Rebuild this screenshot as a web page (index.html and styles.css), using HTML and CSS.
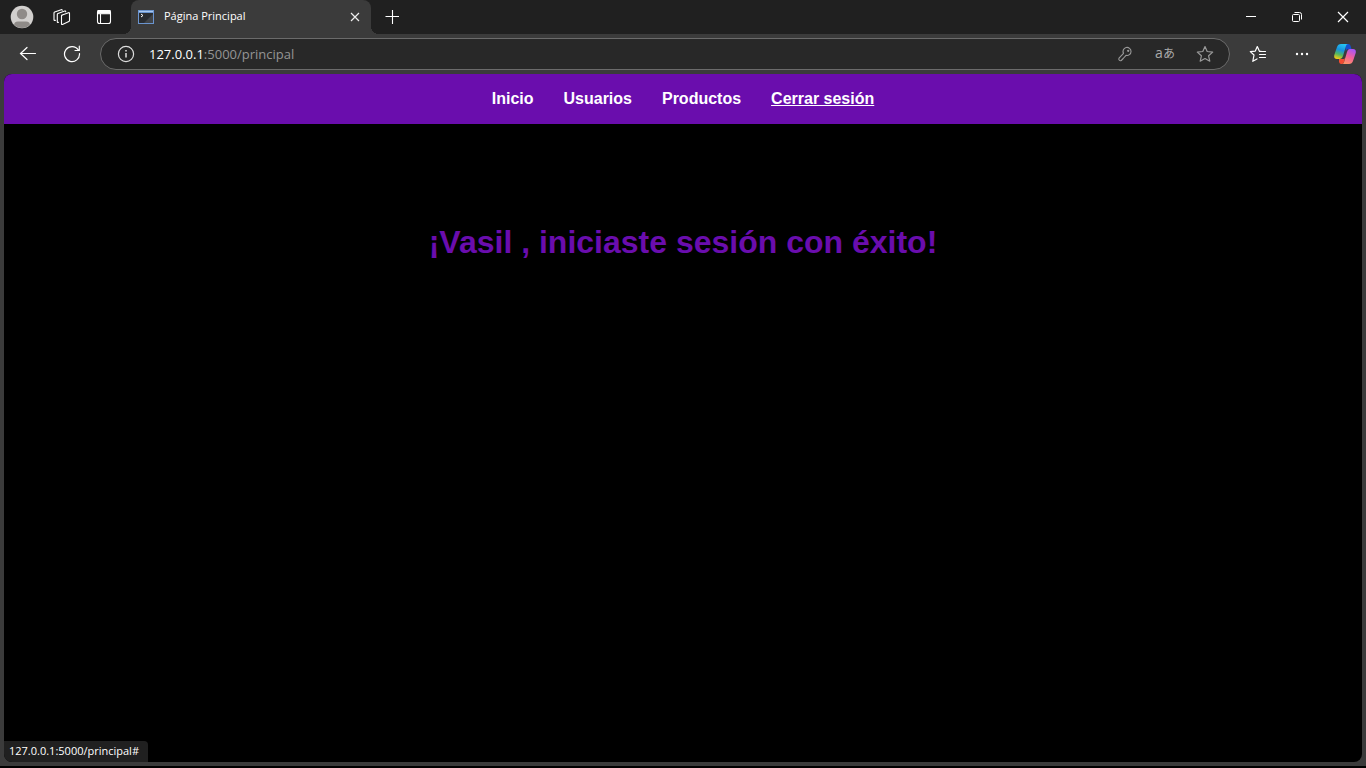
FILE: index.html
```html
<!DOCTYPE html>
<html lang="es">
<head>
<meta charset="utf-8">
<title>Página Principal</title>
<link rel="stylesheet" href="styles.css">
</head>
<body>
<div class="window">
  <header class="titlebar">
    <div class="title-tools">
      <button class="icon-btn profile" aria-label="Perfil">
        <svg width="24" height="24" viewBox="0 0 24 24"><defs><clipPath id="face"><circle cx="12" cy="12" r="11"/></clipPath></defs><circle cx="12" cy="12" r="11.300" fill="#d2d0ce"/><circle cx="12" cy="9" r="5.200" fill="#8f8b88"/><path clip-path="url(#face)" d="M4 24v-3.500q0-4 4-4h8q4 0 4 4V24z" fill="#8f8b88"/></svg>
      </button>
      <button class="icon-btn workspaces" aria-label="Áreas de trabajo">
        <svg width="18" height="18" viewBox="0 0 18 18" fill="none" stroke="#fff" stroke-width="1.100" stroke-linejoin="round" stroke-linecap="round"><path d="M8.500 7.200 15.500 4.700q1-.2 1 .8v6.900q0 .7-.7 1L9.500 16.400q-1 .4-1-.7V8.200q0-.8.700-1z"/><path d="M5.500 14.300l-.5.100q-.7.100-.7-.7V6.600q0-.8.700-1.100l6.700-2.500q1-.3 1 .7"/><path d="M2.500 12.300l-.7.100q-.8.200-.8-.7V5.100q0-.8.700-1.100L8.200 1.700q.9-.3 1 .5"/></svg>
      </button>
      <button class="icon-btn tab-actions" aria-label="Menú de pestañas">
        <svg width="16" height="16" viewBox="0 0 16 16" fill="none" stroke="#fff" stroke-width="1.100"><rect x="1.500" y="1.500" width="13" height="13" rx="2"/><path d="M2 1.500h12v3.200H2z" fill="#fff"/><path d="M4.500 5v9.500"/></svg>
      </button>
    </div>
    <div class="tab">
      <svg width="16" height="16" viewBox="0 0 16 16"><path d="M0 1h16v14H0z" fill="#6a94cf"/><path d="M1 2h14v1H1z" fill="#a9c8ef"/><path d="M1 4h14v10H1z" fill="#292c30"/><path d="M6 14 15 5v9z" fill="#414448"/><path d="m3 5 2 1.500L3 8" fill="none" stroke="#fff"/></svg>
      <span class="tab-title">Página Principal</span>
      <button class="tab-close" aria-label="Cerrar pestaña"><svg width="10" height="10" viewBox="0 0 10 10" stroke="#eee" stroke-width="1.200"><path d="m1 1 8 8M9 1 1 9"/></svg></button>
    </div>
    <button class="new-tab" aria-label="Nueva pestaña"><svg width="14" height="14" viewBox="0 0 14 14" stroke="#fff" stroke-width="1.100"><path d="M7.500 0v14M.5 6.500h14"/></svg></button>
    <div class="window-controls">
      <button aria-label="Minimizar"><svg width="10" height="10" viewBox="0 0 10 10" stroke="#fff"><path d="M0 4.500h10"/></svg></button>
      <button aria-label="Restaurar"><svg width="12" height="12" viewBox="0 0 12 12" fill="none" stroke="#fff"><rect x="1.500" y="3.500" width="7" height="7" rx="1"/><path d="M3.500 1.500h5q2 0 2 2v5"/></svg></button>
      <button aria-label="Cerrar"><svg width="12" height="12" viewBox="0 0 12 12" stroke="#fff" stroke-width="1.200"><path d="m1 1 10 10M11 1 1 11"/></svg></button>
    </div>
  </header>

  <div class="toolbar">
    <button class="tool" aria-label="Atrás"><svg width="18" height="16" viewBox="0 0 18 16" fill="none" stroke="#fff" stroke-width="1.200" stroke-linecap="round"><path d="M16.500 7.500H2M8 1.500l-6.500 6L8 13.500"/></svg></button>
    <button class="tool" aria-label="Actualizar"><svg width="18" height="18" viewBox="0 0 18 18" fill="none" stroke="#fff" stroke-width="1.200" stroke-linecap="round"><path d="M16.500 8.500A7.500 7.500 0 1 1 15.300 5M16.300 1.200V5.500H12"/></svg></button>
    <div class="address">
      <button class="info" aria-label="Información del sitio"><svg width="18" height="18" viewBox="0 0 18 18" fill="none" stroke="#ddd" stroke-width="1.200"><circle cx="9" cy="9" r="7.600"/><path d="M9 8v4.500M9 5v1.500" stroke-width="1.500"/></svg></button>
      <label class="host" for="url">127.0.0.1</label><input id="url" class="path" type="text" value=":5000/principal" spellcheck="false">
      <div class="address-actions">
        <button aria-label="Contraseña"><svg width="16" height="16" viewBox="0 0 16 16" fill="none" stroke="#999" stroke-width="1.100" stroke-linejoin="round"><path d="M6.500 7.300A4 4 0 1 1 9 9.300L6.200 12.500 4.300 14.500q-1 .6-2-.3-.9-1-.3-2z"/><circle cx="11.200" cy="4.800" r=".6" fill="#999"/></svg></button>
        <button class="translate" aria-label="Traducir"><span class="latin">a</span><span class="kana">あ</span></button>
        <button aria-label="Favorito"><svg width="18" height="18" viewBox="0 0 18 18" fill="none" stroke="#999" stroke-width="1.200" stroke-linejoin="round"><path d="m9 1.500 2.200 5 5.500.6-4.100 3.700 1.200 5.400L9 13.500l-4.800 2.700 1.200-5.400L1.300 7.100l5.500-.6z"/></svg></button>
      </div>
    </div>
    <div class="browser-actions">
      <button class="tool" aria-label="Favoritos"><svg width="18" height="18" viewBox="0 0 18 18" fill="none" stroke="#fff" stroke-width="1.200" stroke-linejoin="round" stroke-linecap="round"><path d="M13 6.500l-2.700-.4L8.300 1.500l-2 4.600-5 .5L5 10l-1.200 6.300 4.200-2.400"/><path d="M10.500 6.500h6M10.500 9.500h6M10.500 12.500h6"/></svg></button>
      <button class="tool" aria-label="Configuración"><svg width="14" height="4" viewBox="0 0 14 4" fill="#fff"><circle cx="2" cy="2" r="1.200"/><circle cx="7" cy="2" r="1.200"/><circle cx="12" cy="2" r="1.200"/></svg></button>
      <button class="tool copilot" aria-label="Copilot">
        <svg width="22" height="22" viewBox="0 0 22 22"><defs><linearGradient id="cool" x1=".6" y1="0" x2=".3" y2="1"><stop stop-color="#25c4f3"/><stop offset=".4" stop-color="#1792e0"/><stop offset=".7" stop-color="#51b661"/><stop offset="1" stop-color="#f2cc14"/></linearGradient><linearGradient id="warm" x1=".7" y1="0" x2=".3" y2="1"><stop stop-color="#a855f5"/><stop offset=".5" stop-color="#f2609a"/><stop offset="1" stop-color="#ff9365"/></linearGradient></defs><path d="M11 1h3.500q1.500 0 2 1.700L17.500 6h-3q-2 0-2.700 2z" fill="#164fd0"/><path d="M5 16h5l1-1-1 4q-.6 2-2 2H7q-1.400 0-2-2z" fill="#f34b32"/><path d="M7 1h7q-1.500 0-2 1.800L9 13q-.8 3-3 3H3Q-.5 16 .3 12L3 4q1-3 4-3z" fill="url(#cool)"/><path d="M15.500 6H19q3.500 0 2.700 4L19 18q-1 3-4 3H8q1.500 0 2-1.800L13 9q.8-3 2.500-3z" fill="url(#warm)"/></svg>
      </button>
    </div>
  </div>

  <div class="viewport">
    <nav class="menu">
      <a href="#">Inicio</a>
      <a href="#">Usuarios</a>
      <a href="#">Productos</a>
      <a class="logout" href="#">Cerrar sesión</a>
    </nav>
    <main class="content"><h1>¡Vasil , iniciaste sesión con éxito!</h1></main>
    <div class="status">127.0.0.1:5000/principal#</div>
  </div>
</div>
</body>
</html>
```
FILE: styles.css
```css
* { box-sizing: border-box; }
body { margin: 0; background: #000; }
button { display: flex; align-items: center; justify-content: center; padding: 0; border: 0; background: none; color: inherit; font: inherit; }
svg { display: block; flex: none; }

.window {
  display: flex;
  flex-direction: column;
  height: 100vh;
  background: #3b3b3b;
  border-bottom: 2px solid #000;
  color: #fff;
  font: 12px "Open Sans", "Noto Sans", sans-serif;
}

.titlebar { display: flex; height: 34px; background: #202020; }
.title-tools { display: flex; align-items: center; width: 131px; padding-left: 2px; }
.icon-btn { width: 40px; height: 34px; }
.tab-actions { margin-left: 2px; }

.tab {
  position: relative;
  display: flex;
  align-items: center;
  width: 240px;
  padding: 0 11px 0 7px;
  background: #3b3b3b;
  border-radius: 8px 8px 0 0;
}
.tab::before, .tab::after { content: ""; position: absolute; bottom: 0; width: 8px; height: 8px; }
.tab::before { right: 100%; background: radial-gradient(circle at 0 0, #202020 8px, #3b3b3b 8px); }
.tab::after { left: 100%; background: radial-gradient(circle at 100% 0, #202020 8px, #3b3b3b 8px); }
.tab-title { flex: 1; margin-left: 10px; font-size: 11px; line-height: 16px; padding-bottom: 2px; }
.new-tab { width: 42px; }
.window-controls { display: flex; margin-left: auto; }
.window-controls button { width: 46px; }

.toolbar { display: flex; align-items: center; height: 40px; padding-left: 6px; }
.tool { width: 44px; height: 32px; }
.address {
  display: flex;
  flex: 1;
  align-items: center;
  height: 32px;
  margin-left: 6px;
  padding: 0 12px 0 16px;
  background: #282828;
  border: 1px solid #6b6b6b;
  border-radius: 16px;
  font-size: 13px;
}
.host { margin-left: 14px; }
.path { flex: 1; min-width: 0; padding: 0; border: 0; outline: 0; background: none; color: #959595; font: inherit; }
.address-actions { display: flex; gap: 16px; color: #aaa; }
.address-actions button { width: 24px; height: 24px; }
.latin { font-size: 14px; line-height: 20px; padding-bottom: 2px; }
.kana { font: 12px/20px "Noto Sans CJK JP", sans-serif; padding-bottom: 2px; }
.browser-actions { display: flex; margin-left: 6px; }
.copilot { width: 42px; padding-right: 1px; }

.viewport {
  position: relative;
  flex: 1;
  margin: 0 4px 4px;
  overflow: hidden;
  border-radius: 8px;
  background: #000;
  font-family: "Liberation Sans", Arial, sans-serif;
}
.menu { display: flex; justify-content: center; gap: 30px; padding: 16px; background: #6a0dad; }
.menu a { color: #fff; font-size: 16px; font-weight: bold; line-height: 18px; text-decoration: none; }
.menu .logout { text-decoration: underline; }
.content { padding-top: 100px; text-align: center; }
h1 { margin: 0; color: #6a0dad; font-size: 32px; line-height: 36px; }
.status {
  position: absolute;
  bottom: 0;
  left: 0;
  padding: 2px 9px 3px 5px;
  background: #202020;
  border-radius: 0 4px 0 0;
  font: 11px/16px "Open Sans", "Noto Sans", sans-serif;
}
```
